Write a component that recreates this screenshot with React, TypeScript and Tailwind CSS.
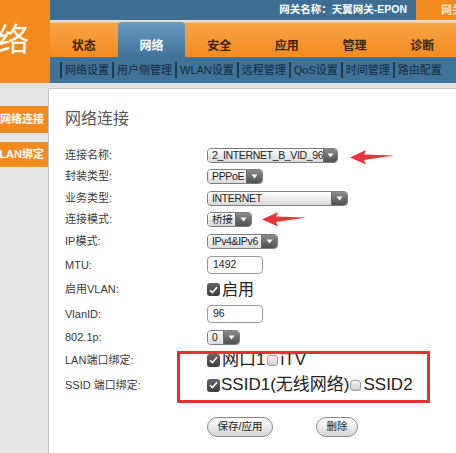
import React from "react";

const FONT = { fontFamily: '"Liberation Sans", "Noto Sans CJK SC", sans-serif' };

const TABS = ["状态", "网络", "安全", "应用", "管理", "诊断"];
const SUBNAV = ["网络设置", "用户侧管理", "WLAN设置", "远程管理", "QoS设置", "时间管理", "路由配置"];

function Select({ text, className }: { text: string; className: string }) {
  return (
    <div className={`flex h-[15px] overflow-hidden rounded-[4px] border border-[#7d7d7d] ${className}`}>
      <div className="flex flex-1 items-center whitespace-nowrap bg-gradient-to-b from-[#ffffff] to-[#d9d9d9] pl-[4px] text-[10.5px] leading-none tracking-[-0.35px] text-[#222]">
        {text}
      </div>
      <div className="flex w-[16px] items-center justify-center border-l border-[#6b6b6b] bg-gradient-to-b from-[#8c8c8c] to-[#4f4f4f]">
        <svg width="7" height="5" viewBox="0 0 7 5">
          <path d="M0.5 0.5 L6.5 0.5 L3.5 4.5 Z" fill="#fff" />
        </svg>
      </div>
    </div>
  );
}

function Input({ value }: { value: string }) {
  return (
    <div className="flex h-[18px] w-[56px] items-center rounded-[4px] border border-[#9a9a9a] bg-white pl-[5px] text-[10.5px] text-[#222]">
      {value}
    </div>
  );
}

function Check({ checked }: { checked: boolean }) {
  if (!checked) {
    return <span className="mx-[1px] inline-block h-[11px] w-[11px] rounded-[3px] border border-[#9c9c9c] bg-gradient-to-b from-[#f4f4f4] to-[#cfcfcf]" />;
  }
  return (
    <span className="inline-flex h-[13px] w-[13px] items-center justify-center rounded-[3px] bg-gradient-to-b from-[#666] to-[#3d3d3d]">
      <svg width="9" height="8" viewBox="0 0 9 8">
        <path d="M1 4.2 L3.4 6.6 L8 1.2" stroke="#fff" strokeWidth="1.6" fill="none" />
      </svg>
    </span>
  );
}

function Row({ label, h, children }: { label: string; h: string; children: React.ReactNode }) {
  return (
    <div className={`flex items-center ${h}`}>
      <div className="w-[142px] text-[11px] text-[#3a3a3a]">{label}</div>
      <div className="flex items-center">{children}</div>
    </div>
  );
}

function Arrow({ className }: { className: string }) {
  return (
    <svg className={`absolute ${className}`} width="44" height="16" viewBox="0 0 44 16">
      <path d="M0 8.5 L16 1 L14 5.5 L44 6.5 L14 11 L16 15.5 Z" fill="#e8353a" />
    </svg>
  );
}

export default function App() {
  return (
    <div className="relative h-[453px] w-[456px] overflow-hidden bg-white" style={FONT}>
      {/* header */}
      <div className="flex h-[83px]">
        <div className="w-[50px] overflow-hidden bg-[#f28a1e]">
          <div className="ml-[-3px] mt-[24px] text-[32px] leading-none text-white">络</div>
        </div>
        <div className="flex flex-1 flex-col">
          <div className="flex h-[20px] bg-[#3d6f94]">
            <div className="flex flex-1 items-center justify-end pr-[9px] text-[10.5px] font-bold text-white">
              网关名称：天翼网关-EPON
            </div>
            <div className="flex w-[40px] items-center overflow-hidden bg-[#f28a1e] pl-[25px] text-[11px] font-bold text-[#fde6c8] whitespace-nowrap">
              网关
            </div>
          </div>
          <div className="h-[3px] bg-gradient-to-b from-[#dfe6ec] to-[#f7c48a]" />
          <div className="flex h-[34px] bg-gradient-to-b from-[#f8a444] to-[#f28a1e]">
            {TABS.map((t, i) => (
              <div
                key={t}
                className={`flex flex-1 items-center justify-center pt-[12px] text-[12px] font-bold ${
                  i === 1
                    ? "mt-[-1px] rounded-t-[4px] bg-gradient-to-b from-[#6a9cc2] to-[#3f729a] text-white"
                    : "text-[#3a2406]"
                }`}
              >
                {t}
              </div>
            ))}
          </div>
          <div className="flex h-[26px] items-center bg-[#3f739a] pl-[10px]">
            {SUBNAV.map((s) => (
              <div key={s} className="flex h-[16px] items-center border-l-2 border-[#1e3b54] px-[3px] text-[11px] leading-none text-[#13283a]">
                {s}
              </div>
            ))}
          </div>
        </div>
      </div>
      <div className="h-[5px] bg-[#e2e2e2]" />

      {/* body */}
      <div className="flex h-[365px]">
        <div className="w-[48px] bg-[#e6e6e6]">
          <div className="mt-[18px] flex h-[27px] items-center justify-end overflow-hidden whitespace-nowrap bg-[#f28a1e] pr-[4px] text-[11px] font-bold text-white">
            网络连接
          </div>
          <div className="mt-[9px] flex h-[25px] items-center justify-end overflow-hidden whitespace-nowrap bg-[#f28a1e] pr-[4px] text-[11px] font-bold text-white">
            VLAN绑定
          </div>
        </div>
        <div className="flex-1 border-l border-t border-[#c4c4c4] pl-[16px] pt-[19px]">
          <div className="mb-[15px] h-[22px] text-[16px] leading-[22px] text-[#555]">网络连接</div>
          <Row label="连接名称:" h="h-[21px]">
            <Select text="2_INTERNET_B_VID_96" className="w-[131px]" />
          </Row>
          <Row label="封装类型:" h="h-[21px]">
            <Select text="PPPoE" className="w-[56px]" />
          </Row>
          <Row label="业务类型:" h="h-[22px]">
            <Select text="INTERNET" className="w-[141px]" />
          </Row>
          <Row label="连接模式:" h="h-[21px]">
            <Select text="桥接" className="w-[45px]" />
          </Row>
          <Row label="IP模式:" h="h-[23px]">
            <Select text="IPv4&IPv6" className="w-[71px]" />
          </Row>
          <Row label="MTU:" h="h-[24px]">
            <Input value="1492" />
          </Row>
          <Row label="启用VLAN:" h="h-[25px]">
            <Check checked />
            <span className="ml-[2px] text-[16px] text-[#222]">启用</span>
          </Row>
          <Row label="VlanID:" h="h-[24px]">
            <Input value="96" />
          </Row>
          <Row label="802.1p:" h="h-[22px]">
            <Select text="0" className="w-[33px]" />
          </Row>
          <Row label="LAN端口绑定:" h="h-[24px]">
            <Check checked />
            <span className="ml-[2px] mr-[1px] text-[17px] text-[#222]">网口1</span>
            <Check checked={false} />
            <span className="ml-[1px] text-[17px] text-[#222]">iTV</span>
          </Row>
          <Row label="SSID 端口绑定:" h="h-[26px]">
            <Check checked />
            <span className="ml-[1px] text-[17px] text-[#222]">SSID1(无线网络)</span>
            <Check checked={false} />
            <span className="ml-[1px] text-[17px] text-[#222]">SSID2</span>
          </Row>
          <div className="mt-[19px] flex gap-[43px] pl-[142px]">
            <button className="h-[20px] w-[66px] rounded-full border border-[#8a8a8a] bg-gradient-to-b from-[#ffffff] to-[#d6d6d6] text-[10.5px] text-[#222]">
              保存/应用
            </button>
            <button className="h-[20px] w-[42px] rounded-full border border-[#8a8a8a] bg-gradient-to-b from-[#ffffff] to-[#d6d6d6] text-[10.5px] text-[#222]">
              删除
            </button>
          </div>
        </div>
      </div>

      {/* annotations */}
      <div className="absolute left-[177px] top-[351px] h-[52px] w-[253px] border-[3px] border-[#e5302f]" />
      <Arrow className="left-[350px] top-[149px]" />
      <Arrow className="left-[262px] top-[211px]" />
    </div>
  );
}
